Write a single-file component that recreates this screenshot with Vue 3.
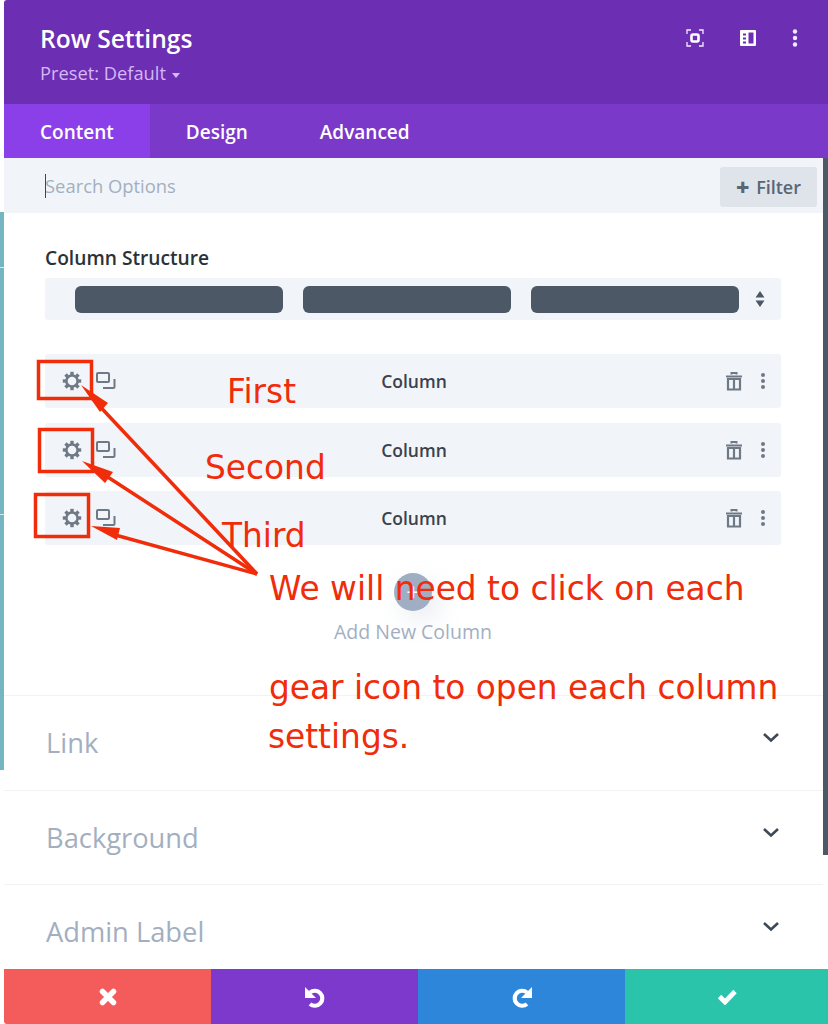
<script setup>
const tabs = ['Content', 'Design', 'Advanced']
const teeth = [0, 45, 90, 135, 180, 225, 270, 315]
const sections = ['Link', 'Background', 'Admin Label']
const columns = [1, 2, 3]
const arrows = [
  { line: '257,574 92,398', head: '81,385 100,412 108,403' },
  { line: '257,574 100,472', head: '82,461 105,483 113,472' },
  { line: '257,574 108,533', head: '91,526 117,540 120,528' }
]
</script>

<template>
  <div class="page">
    <div class="side-strip"><i></i><i></i></div>
    <div class="right-strip"></div>

    <div class="modal">
      <header class="head">
        <div>
          <h1>Row Settings</h1>
          <p>Preset: Default <span class="caret"></span></p>
        </div>
        <div class="head-icons">
          <svg width="18" height="18" viewBox="0 0 18 18" fill="none" stroke="#f6ecff" stroke-width="1.300">
            <path d="M1 5V1h4M13 1h4v4M17 13v4h-4M5 17H1v-4" />
            <rect x="5.500" y="5.500" width="7" height="7" rx="1.500" stroke="#fff" stroke-width="2.600" />
          </svg>
          <svg width="18" height="18" viewBox="0 0 18 18">
            <path fill="#fff" fill-rule="evenodd" d="M2 1h14a1 1 0 0 1 1 1v14a1 1 0 0 1-1 1H2a1 1 0 0 1-1-1V2a1 1 0 0 1 1-1zm7.500 2.500v11h5v-11zM4 4.500v2h3v-2zm0 4v2h3v-2zm0 4v2h3v-2z" />
          </svg>
          <svg width="6" height="18" viewBox="0 0 6 18" fill="#f3e8ff">
            <circle cx="3" cy="2.500" r="2.200" /><circle cx="3" cy="9" r="2.200" /><circle cx="3" cy="15.500" r="2.200" />
          </svg>
        </div>
      </header>

      <nav class="tabs">
        <a v-for="(tab, i) in tabs" :key="tab" :class="{ active: i === 0 }">{{ tab }}</a>
      </nav>

      <div class="search">
        <span class="cursor"></span>
        <span class="placeholder">Search Options</span>
        <button class="filter"><b>+</b> Filter</button>
      </div>

      <div class="content">
        <h2>Column Structure</h2>
        <div class="structure">
          <span class="bar"></span><span class="bar"></span><span class="bar"></span>
          <svg width="10" height="18" viewBox="0 0 10 18" fill="#4c5866">
            <path d="M5 1l4.500 6.500h-9zM5 17L.5 10.500h9z" />
          </svg>
        </div>

        <div class="rows">
          <div v-for="c in columns" :key="c" class="row">
            <div class="row-left">
              <svg width="20" height="20" viewBox="0 0 20 20">
                <rect v-for="a in teeth" :key="a" x="8.300" y="0.800" width="3.400" height="3.500" fill="#6f7985" :transform="`rotate(${a} 10 10)`" />
                <circle cx="10" cy="10" r="5.600" fill="none" stroke="#6f7985" stroke-width="2.500" />
              </svg>
              <svg width="20" height="18" viewBox="0 0 20 18" fill="none" stroke="#6f7985" stroke-width="2">
                <rect x="1" y="1" width="12" height="9" rx="1" />
                <path d="M18.500 7v8a1 1 0 0 1-1 1H7" />
              </svg>
            </div>
            <span class="row-name">Column</span>
            <div class="row-right">
              <svg width="18" height="20" viewBox="0 0 18 20" fill="none" stroke="#6f7985">
                <path d="M1 5.500h16M6.500 3.500V2h5v1.500" stroke-width="2" />
                <path d="M3 8h12v10.500H3zM9 8v10" stroke-width="2.200" />
              </svg>
              <svg width="6" height="16" viewBox="0 0 6 16" fill="#6f7985">
                <circle cx="3" cy="2" r="2" /><circle cx="3" cy="8" r="2" /><circle cx="3" cy="14" r="2" />
              </svg>
            </div>
          </div>
        </div>

        <div class="add-col">
          <span class="add-btn">+</span>
          <span class="add-label">Add New Column</span>
        </div>
      </div>

      <section v-for="s in sections" :key="s" class="toggle">
        <span>{{ s }}</span>
        <svg width="18" height="11" viewBox="0 0 18 11" fill="none" stroke="#3e4956" stroke-width="2.600">
          <path d="M2 2l7 6.500L16 2" />
        </svg>
      </section>

      <footer class="foot">
        <button class="red">
          <svg width="18" height="18" viewBox="0 0 18 18" fill="none" stroke="#fff" stroke-width="5.500" stroke-linecap="round">
            <path d="M3.500 3.500l11 11M14.500 3.500l-11 11" />
          </svg>
        </button>
        <button class="purple">
          <svg width="22" height="22" viewBox="0 0 22 22" fill="none" stroke="#fff" stroke-width="4.200">
            <path d="M6 6.500A7.500 7.500 0 1 1 6 18" />
            <path d="M1 1v11h11z" fill="#fff" stroke="none" />
          </svg>
        </button>
        <button class="blue">
          <svg width="22" height="22" viewBox="0 0 22 22" fill="none" stroke="#fff" stroke-width="4.200">
            <path d="M16 6.500A7.500 7.500 0 1 0 16 18" />
            <path d="M21 1v11H10z" fill="#fff" stroke="none" />
          </svg>
        </button>
        <button class="green">
          <svg width="20" height="16" viewBox="0 0 20 16" fill="none" stroke="#fff" stroke-width="4.800">
            <path d="M2.500 7.500l5.500 5.500L18 2.500" />
          </svg>
        </button>
      </footer>
    </div>

    <!-- red notes drawn on top of the screenshot -->
    <svg class="marks" width="828" height="1024" viewBox="0 0 828 1024" fill="none" stroke="#f02c0a">
      <rect x="38.500" y="361.500" width="53" height="37" stroke-width="3.500" />
      <rect x="39.500" y="429.500" width="53" height="42" stroke-width="3.500" />
      <rect x="35.500" y="494.500" width="53" height="42" stroke-width="3.500" />
      <g v-for="a in arrows" :key="a.head">
        <polyline :points="a.line" stroke-width="3.500" />
        <polygon :points="a.head" fill="#f02c0a" stroke="none" />
      </g>
    </svg>
    <span class="note first">First</span>
    <span class="note second">Second</span>
    <span class="note third">Third</span>
    <span class="note line1">We will need to click on each</span>
    <span class="note line2">gear icon to open each column</span>
    <span class="note line3">settings.</span>
  </div>
</template>

<style>
html, body {
  margin: 0;
  background: #fff;
}
</style>

<style scoped>
.page {
  position: relative;
  width: 828px;
  height: 1024px;
  overflow: hidden;
  background: #fff;
  font-family: "Open Sans", sans-serif;
}

.side-strip {
  position: absolute;
  left: 0;
  top: 212px;
  width: 4px;
  height: 558px;
  background: #74b5c1;
}

.side-strip i {
  display: block;
  height: 1px;
  background: #d6e9ec;
  margin-top: 55px;
}

.side-strip i + i {
  margin-top: 246px;
}

.right-strip {
  position: absolute;
  right: 0;
  top: 158px;
  width: 5px;
  height: 697px;
  background: #4c5866;
}

.modal {
  width: 819px;
  margin-left: 4px;
  height: 1024px;
  display: flex;
  flex-direction: column;
}

.head {
  width: 824px;
  height: 104px;
  box-sizing: border-box;
  flex: none;
  background: #6c2eb3;
  padding: 22px 30px 0 36px;
  display: flex;
  justify-content: space-between;
  align-items: flex-start;
  color: #fff;
  border-top-left-radius: 3px;
}

.head h1 {
  margin: 0;
  font-size: 24.600px;
  line-height: 33px;
  font-weight: 600;
}

.head p {
  margin: 7px 0 0;
  font-size: 18.300px;
  line-height: 22px;
  color: #d5b8f5;
  font-weight: 500;
}

.caret {
  display: inline-block;
  vertical-align: middle;
  margin-left: 1px;
  border: 4px solid transparent;
  border-top: 5px solid #d5b8f5;
  border-bottom: 0;
}

.head-icons {
  display: flex;
  align-items: center;
  gap: 35px;
  margin-top: 7px;
}

.tabs {
  width: 824px;
  height: 54px;
  flex: none;
  display: flex;
  background: #7a39c9;
}

.tabs a {
  padding: 0 36px;
  line-height: 56px;
  font-size: 19px;
  font-weight: 600;
  color: #fff;
}

.tabs a.active {
  background: #8a3fe8;
}

.search {
  height: 55px;
  flex: none;
  box-sizing: border-box;
  background: #f1f5f9;
  padding: 9px 6px 0 41px;
  display: flex;
  align-items: flex-start;
  position: relative;
}

.cursor {
  position: absolute;
  left: 41px;
  top: 16px;
  width: 1px;
  height: 24px;
  background: #3e4956;
}

.placeholder {
  font-size: 18.400px;
  line-height: 38px;
  color: #a3afbf;
  flex: 1;
}

.filter {
  width: 97px;
  height: 40px;
  border: 0;
  border-radius: 3px;
  background: #dfe4ea;
  color: #5a6674;
  font: 600 18px "Open Sans", sans-serif;
  padding: 0;
}

.filter b {
  font-size: 23px;
  line-height: 20px;
  vertical-align: -2px;
  margin-right: 2px;
}

.content {
  height: 482px;
  flex: none;
  box-sizing: border-box;
  padding: 32px 42px 0 41px;
}

.content h2 {
  margin: 0 0 8px;
  font-size: 19.200px;
  line-height: 25px;
  font-weight: 600;
  color: #2a3138;
}

.structure {
  height: 42px;
  background: #f1f5f9;
  border-radius: 3px;
  padding: 0 0 0 30px;
  display: flex;
  align-items: center;
  gap: 20px;
}

.bar {
  flex: none;
  width: 208px;
  height: 27px;
  border-radius: 6px;
  background: #4c5866;
}

.structure svg {
  margin-left: -4px;
}

.rows {
  margin-top: 34px;
  display: flex;
  flex-direction: column;
  gap: 14.500px;
}

.row {
  height: 54px;
  background: #f1f5f9;
  border-radius: 3px;
  display: grid;
  grid-template-columns: 1fr auto 1fr;
  align-items: center;
  padding: 0 15px 0 17px;
}

.row-left {
  display: flex;
  align-items: center;
  gap: 14px;
}

.row-right {
  display: flex;
  align-items: center;
  justify-content: flex-end;
  gap: 17px;
}

.row-name {
  font-size: 17.500px;
  font-weight: 600;
  color: #3a424c;
}

.add-col {
  margin-top: 28px;
  display: flex;
  flex-direction: column;
  align-items: center;
}

.add-btn {
  width: 38px;
  height: 38px;
  border-radius: 50%;
  background: #a0aec3;
  color: #fff;
  text-align: center;
  font-size: 24px;
  line-height: 38px;
  box-shadow: 8px 10px 24px rgba(160, 174, 195, 0.22);
}

.add-label {
  margin-top: 9px;
  font-size: 19.500px;
  line-height: 24px;
  color: #a3afbf;
  font-weight: 500;
}

.toggle {
  height: 94.500px;
  flex: none;
  box-sizing: border-box;
  border-top: 1px solid #f0f2f5;
  padding: 26px 43px 0 42px;
  display: flex;
  justify-content: space-between;
  align-items: flex-start;
  font-size: 27.300px;
  line-height: 42px;
  color: #a3afbf;
}

.toggle svg {
  margin-top: 10px;
}

.foot {
  position: absolute;
  left: 4px;
  right: 0;
  top: 969px;
  height: 55px;
  display: grid;
  grid-template-columns: 207px 207px 207px 1fr;
}

.foot button {
  border: 0;
  padding: 0;
  display: flex;
  align-items: center;
  justify-content: center;
}

.red {
  background: #f45b5b;
  border-bottom-left-radius: 3px;
}

.purple {
  background: #7d39cb;
}

.blue {
  background: #2e86da;
}

.green {
  background: #29c4a9;
}

.marks {
  position: absolute;
  left: 0;
  top: 0;
  pointer-events: none;
}

.note {
  position: absolute;
  font-family: "DejaVu Sans", sans-serif;
  font-size: 32.800px;
  line-height: 40px;
  color: #f02c0a;
  white-space: nowrap;
}

.first { left: 227px; top: 372px; }
.second { left: 205px; top: 448px; }
.third { left: 222px; top: 516px; }
.line1 { left: 269px; top: 569px; }
.line2 { left: 269px; top: 668px; }
.line3 { left: 268px; top: 717px; }
</style>
